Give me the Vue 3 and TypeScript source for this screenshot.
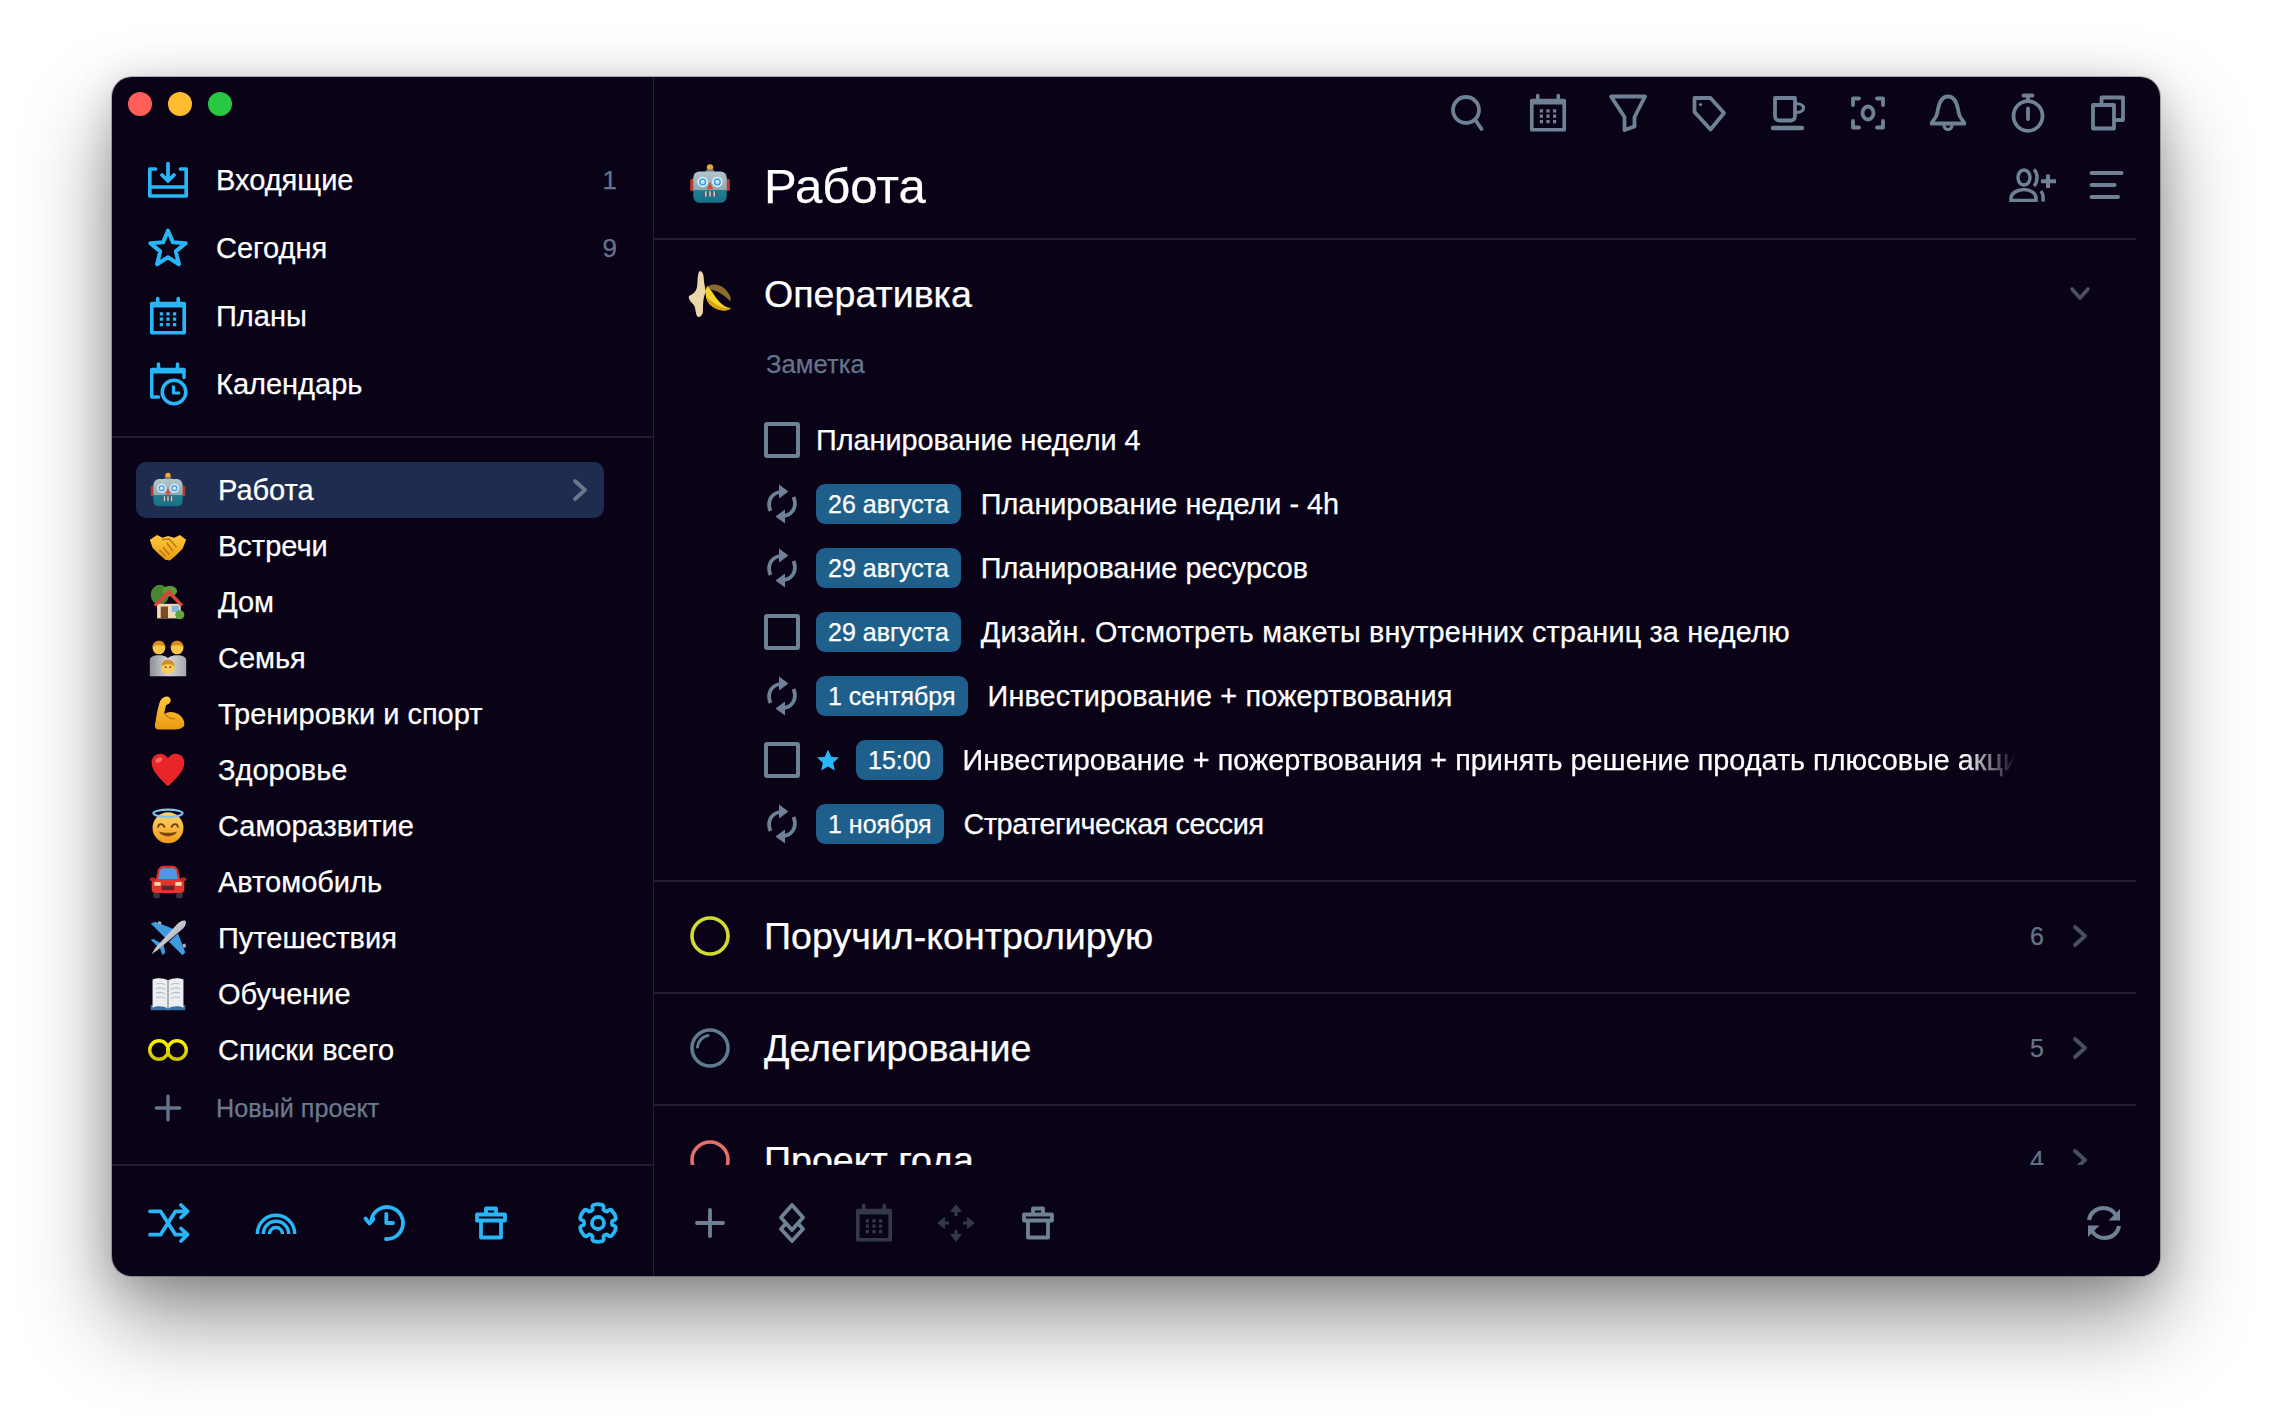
<script setup lang="ts">
interface NavItem { icon: string; label: string; count?: string }
interface Project { icon: string; label: string; active?: boolean }
interface Task { icon: 'check' | 'repeat'; star?: boolean; badge?: string; text: string; long?: boolean; fit?: 'tight' | 'wide' }
interface Section { title: string; count: string; ring: string }

const nav: NavItem[] = [
  { icon: 'i-inbox', label: 'Входящие', count: '1' },
  { icon: 'i-star', label: 'Сегодня', count: '9' },
  { icon: 'i-cal', label: 'Планы' },
  { icon: 'i-calclock', label: 'Календарь' },
]
const projects: Project[] = [
  { icon: 'e-robot', label: 'Работа', active: true },
  { icon: 'e-hands', label: 'Встречи' },
  { icon: 'e-house', label: 'Дом' },
  { icon: 'e-family', label: 'Семья' },
  { icon: 'e-muscle', label: 'Тренировки и спорт' },
  { icon: 'e-heart', label: 'Здоровье' },
  { icon: 'e-halo', label: 'Саморазвитие' },
  { icon: 'e-car', label: 'Автомобиль' },
  { icon: 'e-plane', label: 'Путешествия' },
  { icon: 'e-book', label: 'Обучение' },
  { icon: 'e-rings', label: 'Списки всего' },
]
const sideFoot = ['i-shuffle', 'i-rainbow', 'i-history', 'i-bin', 'i-gear']
const topIcons = ['i-search', 'i-cal', 'i-funnel', 'i-tag', 'i-cup', 'i-focus', 'i-bell', 'i-watch', 'i-copy']
const tasks: Task[] = [
  { icon: 'check', text: 'Планирование недели 4' },
  { icon: 'repeat', badge: '26 августа', text: 'Планирование недели - 4h' },
  { icon: 'repeat', badge: '29 августа', text: 'Планирование ресурсов' },
  { icon: 'check', badge: '29 августа', text: 'Дизайн. Отсмотреть макеты внутренних страниц за неделю', fit: 'wide' },
  { icon: 'repeat', badge: '1 сентября', text: 'Инвестирование + пожертвования', fit: 'wide' },
  { icon: 'check', star: true, badge: '15:00', long: true, text: 'Инвестирование + пожертвования + принять решение продать плюсовые акции' },
  { icon: 'repeat', badge: '1 ноября', text: 'Стратегическая сессия', fit: 'tight' },
]
const sections: Section[] = [
  { title: 'Поручил-контролирую', count: '6', ring: 'lime' },
  { title: 'Делегирование', count: '5', ring: 'slate' },
  { title: 'Проект года', count: '4', ring: 'coral' },
]
const mainFoot = [
  { id: 'i-plus', dim: false, big: false },
  { id: 'i-stack', dim: false, big: false },
  { id: 'i-cal', dim: true, big: false },
  { id: 'i-move', dim: true, big: false },
  { id: 'i-bin', dim: false, big: true },
]

function polar(r: number, deg: number): string {
  const a = (deg * Math.PI) / 180
  return `${(22 + r * Math.cos(a)).toFixed(2)} ${(22 + r * Math.sin(a)).toFixed(2)}`
}
const gearPath = (() => {
  let d = ''
  for (let i = 0; i < 6; i++) {
    const a = -90 + 60 * i
    d += `${i === 0 ? 'M' : 'L'}${polar(14.4, a - 22)}`
    d += `Q${polar(19.5, a - 20)} ${polar(18.6, a - 9)}`
    d += `Q${polar(19.2, a)} ${polar(18.6, a + 9)}`
    d += `Q${polar(19.5, a + 20)} ${polar(14.4, a + 22)}`
    d += `Q${polar(13.4, a + 30)} ${polar(14.4, a + 38)}`
  }
  return d + 'Z'
})()
</script>

<template>
  <div class="page">
    <svg class="sprite" aria-hidden="true">
      <defs>
        <linearGradient id="g-robot" x1="0" y1="0" x2="0" y2="1">
          <stop offset="0" stop-color="#b4c6cc" /><stop offset=".58" stop-color="#90a9b3" /><stop offset=".6" stop-color="#1f7f93" /><stop offset="1" stop-color="#1a6f85" />
        </linearGradient>
        <linearGradient id="g-yellow" x1="0" y1="0" x2="0" y2="1">
          <stop offset="0" stop-color="#ffc83d" /><stop offset="1" stop-color="#e99a12" />
        </linearGradient>
        <linearGradient id="g-gray" x1="0" y1="0" x2="1" y2="0">
          <stop offset="0" stop-color="#8d8f96" /><stop offset=".5" stop-color="#d5d6da" /><stop offset="1" stop-color="#a6a8ae" />
        </linearGradient>
        <linearGradient id="g-face" x1="0" y1="0" x2="0" y2="1">
          <stop offset="0" stop-color="#ffd766" /><stop offset="1" stop-color="#f09a1e" />
        </linearGradient>
        <linearGradient id="g-silver" x1="0" y1="0" x2="1" y2="1">
          <stop offset="0" stop-color="#f2f4f6" /><stop offset="1" stop-color="#8f959c" />
        </linearGradient>
        <linearGradient id="g-rings" x1="0" y1="0" x2="0" y2="1">
          <stop offset="0" stop-color="#fff200" /><stop offset="1" stop-color="#cfc400" />
        </linearGradient>
      </defs>

      <symbol id="i-inbox" viewBox="0 0 40 40"><path d="M7.500 9H1.800V36H38.200V9H32.500M1.800 27H38.200M20 3.500V20.500M14 15L20 21L26 15" fill="none" stroke="currentColor" stroke-width="3.700" stroke-linecap="round" stroke-linejoin="round" /></symbol>
      <symbol id="i-star" viewBox="1 1 38 38"><path d="M20 3.500L24.600 14.600L36.800 15.400L27.400 23.200L30.400 35.400L20 28.800L9.600 35.400L12.600 23.200L3.200 15.400L15.400 14.600Z" fill="none" stroke="currentColor" stroke-width="3.800" stroke-linejoin="round" /></symbol>
      <symbol id="i-cal" viewBox="1.500 1.500 37 37">
        <path d="M5 8.500H35V35.500H5ZM10.500 4V8M29.500 4V8" fill="none" stroke="currentColor" stroke-width="3.400" stroke-linecap="round" stroke-linejoin="round" />
        <path d="M5 10.500H35" stroke="currentColor" stroke-width="3.200" />
        <path d="M12.400 16.500h3v3h-3zM18.500 16.500h3v3h-3zM24.600 16.500h3v3h-3zM12.400 21.500h3v3h-3zM18.500 21.500h3v3h-3zM24.600 21.500h3v3h-3zM12.400 26.500h3v3h-3zM18.500 26.500h3v3h-3zM24.600 26.500h3v3h-3z" fill="currentColor" />
      </symbol>
      <symbol id="i-calclock" viewBox="0 -3 40 46">
        <path d="M10.500 33H3.700V5.500H36V13.500M10.500 0V5M29.500 0V5" fill="none" stroke="currentColor" stroke-width="3.500" stroke-linecap="round" stroke-linejoin="round" />
        <path d="M3.700 8H36" stroke="currentColor" stroke-width="3" />
        <circle cx="26" cy="28" r="11.800" fill="#0a0318" stroke="currentColor" stroke-width="3.500" />
        <path d="M25.500 21.500V29H32" fill="none" stroke="currentColor" stroke-width="3.200" stroke-linejoin="round" />
      </symbol>

      <symbol id="i-shuffle" viewBox="0 0 44 44">
        <path d="M3 10.300H13.500L28.500 33.700H40M3 33.700H13.500L28.500 10.300H40M34 4L40.500 10.300L34 16.500M34 27.500L40.500 33.700L34 40" fill="none" stroke="currentColor" stroke-width="3.800" stroke-linecap="round" stroke-linejoin="round" />
      </symbol>
      <symbol id="i-rainbow" viewBox="0 0 44 44">
        <path d="M3.300 33A18.700 18.700 0 0 1 40.700 33M9.300 33A12.700 12.700 0 0 1 34.700 33M15.500 33A6.500 6.500 0 0 1 28.500 33" fill="none" stroke="currentColor" stroke-width="3.400" />
      </symbol>
      <symbol id="i-history" viewBox="0 0 44 44">
        <path d="M9.500 18A16 16 0 1 1 24 38" fill="none" stroke="currentColor" stroke-width="3.800" stroke-linecap="round" />
        <path d="M3.500 17.500L7.500 22.500L11.500 18" fill="none" stroke="currentColor" stroke-width="3.800" stroke-linejoin="round" stroke-linecap="round" />
        <path d="M24.300 13V22H31" fill="none" stroke="currentColor" stroke-width="3.800" stroke-linejoin="round" stroke-linecap="round" />
      </symbol>
      <symbol id="i-bin" viewBox="0 0 44 44">
        <path d="M17 12V7.500H27V12M8 13.500H36V19.500H8ZM12 19.500V36.500H32V19.500" fill="none" stroke="currentColor" stroke-width="3.800" stroke-linejoin="round" />
      </symbol>
      <symbol id="i-gear" viewBox="0 0 44 44">
        <path :d="gearPath" fill="none" stroke="currentColor" stroke-width="3.800" stroke-linejoin="round" />
        <circle cx="22" cy="22" r="6" fill="none" stroke="currentColor" stroke-width="3.800" />
      </symbol>

      <symbol id="i-search" viewBox="0 0 40 40">
        <circle cx="18" cy="17" r="13" fill="none" stroke="currentColor" stroke-width="3.800" />
        <path d="M27 26.500L33.500 36" fill="none" stroke="currentColor" stroke-width="3.800" stroke-linecap="round" />
      </symbol>
      <symbol id="i-funnel" viewBox="0 0 40 40">
        <path d="M3 3.500H37L26.500 24V33.500L16.500 37V24Z" fill="none" stroke="currentColor" stroke-width="3.800" stroke-linejoin="round" />
      </symbol>
      <symbol id="i-tag" viewBox="0 0 40 40">
        <path d="M6.500 5H22.500L36 20L22.500 36.500L6.500 19Z" fill="none" stroke="currentColor" stroke-width="3.800" stroke-linejoin="round" />
        <circle cx="12.500" cy="11.500" r="1.600" fill="currentColor" />
      </symbol>
      <symbol id="i-cup" viewBox="0 0 40 40">
        <path d="M7 5H27V23C27 26 25 27.500 22.500 27.500H11.500C9 27.500 7 26 7 23Z" fill="none" stroke="currentColor" stroke-width="3.800" stroke-linejoin="round" />
        <path d="M27.500 10.500C32.500 10.500 35.500 12.500 35.500 15C35.500 17.500 32.500 19.500 27.500 19.500" fill="none" stroke="currentColor" stroke-width="3.200" />
        <path d="M5 35H34" stroke="currentColor" stroke-width="4.400" stroke-linecap="round" />
      </symbol>
      <symbol id="i-focus" viewBox="0 0 40 40">
        <path d="M11 5.500H5V12M29 5.500H35V12M11 34.500H5V28M29 34.500H35V28" fill="none" stroke="currentColor" stroke-width="3.800" stroke-linecap="round" stroke-linejoin="round" />
        <ellipse cx="20" cy="20" rx="5.500" ry="6.500" fill="none" stroke="currentColor" stroke-width="3.800" />
      </symbol>
      <symbol id="i-bell" viewBox="0 0 40 40">
        <path d="M3.500 30.500C3.500 28.500 8.500 26 9.500 19C10.500 12 12.500 3.500 20 3.500C27.500 3.500 29.500 12 30.500 19C31.500 26 36.500 28.500 36.500 30.500Z" fill="none" stroke="currentColor" stroke-width="3.800" stroke-linejoin="round" />
        <path d="M16 31.500C16 35 18 36.500 20 36.500C22 36.500 24 35 24 31.500" fill="none" stroke="currentColor" stroke-width="3.200" />
      </symbol>
      <symbol id="i-watch" viewBox="0 0 40 40">
        <ellipse cx="20" cy="23" rx="14.500" ry="14.800" fill="none" stroke="currentColor" stroke-width="3.800" />
        <path d="M15.500 2.500H24.500M20 3V8M20 15.500V26" fill="none" stroke="currentColor" stroke-width="3.800" stroke-linecap="round" />
      </symbol>
      <symbol id="i-copy" viewBox="0 0 40 40">
        <path d="M13.500 12V4.500H35V27H27" fill="none" stroke="currentColor" stroke-width="3.800" stroke-linejoin="round" />
        <path d="M5 12H26V35.500H5Z" fill="none" stroke="currentColor" stroke-width="3.800" stroke-linejoin="round" />
      </symbol>
      <symbol id="i-addperson" viewBox="0 0 48 34">
        <ellipse cx="15" cy="9.500" rx="6" ry="7.500" fill="none" stroke="currentColor" stroke-width="3.500" />
        <path d="M25 1.500C29 5 29 14 25 18M2 32.500V30C2 25 9 21.500 15 21.500C21 21.500 27 25 27 30V32.500ZM32 23C34 25.500 34.500 29 34 33.500" fill="none" stroke="currentColor" stroke-width="3.500" />
        <path d="M39 6.500V20M32 13.300H47" stroke="currentColor" stroke-width="4" />
      </symbol>
      <symbol id="i-lines" viewBox="0 0 40 40">
        <path d="M4.500 8H34.500M4.500 20H27.500M4.500 32H31" stroke="currentColor" stroke-width="4" stroke-linecap="round" />
      </symbol>
      <symbol id="i-plus" viewBox="0 0 40 40">
        <path d="M20 7V33M7 20H33" stroke="currentColor" stroke-width="3.800" stroke-linecap="round" />
      </symbol>
      <symbol id="i-stack" viewBox="0 0 40 40">
        <path d="M20 2L31 14.500L20 27L9 14.500Z" fill="none" stroke="currentColor" stroke-width="3.800" stroke-linejoin="round" />
        <path d="M13.500 21L9 26L20 38L31 26L26.500 21" fill="none" stroke="currentColor" stroke-width="3.800" stroke-linejoin="round" />
      </symbol>
      <symbol id="i-move" viewBox="0 0 40 40">
        <path d="M20 1L26 9H14ZM20 39L14 31H26ZM1 20L9 14V26ZM39 20L31 26V14Z" fill="currentColor" />
        <path d="M20 9V13M20 27V31M9 20H13M27 20H31" stroke="currentColor" stroke-width="3" />
      </symbol>
      <symbol id="i-repeat" viewBox="0 0 32 40">
        <path d="M4.500 27C1.500 20 3 10 14 8" fill="none" stroke="currentColor" stroke-width="3.800" />
        <path d="M13 .500L22.500 7.500L13 14.500Z" fill="currentColor" />
        <path d="M27.500 13C30.500 20 29 30 18 32" fill="none" stroke="currentColor" stroke-width="3.800" />
        <path d="M19 39.500L9.500 32.500L19 25.500Z" fill="currentColor" />
      </symbol>
      <symbol id="i-refresh" viewBox="0 0 40 40">
        <path d="M5 17C6 10 12 5 19.500 5C25 5 29.500 8 32 12" fill="none" stroke="currentColor" stroke-width="4" />
        <path d="M36 6V17.500H24.500Z" fill="currentColor" />
        <path d="M35 23C34 30 28 35 20.500 35C15 35 10.500 32 8 28" fill="none" stroke="currentColor" stroke-width="4" />
        <path d="M4 34V22.500H15.500Z" fill="currentColor" />
      </symbol>
      <symbol id="i-chev" viewBox="0 0 20 24">
        <path d="M5 3L15 12L5 21" fill="none" stroke="currentColor" stroke-width="3.800" stroke-linecap="round" stroke-linejoin="round" />
      </symbol>
      <symbol id="i-down" viewBox="0 0 24 20">
        <path d="M4 5L12 14L20 5" fill="none" stroke="currentColor" stroke-width="3.600" stroke-linecap="round" stroke-linejoin="round" />
      </symbol>

      <symbol id="e-robot" viewBox="-2 -2 44 44">
        <circle cx="20" cy="4" r="3" fill="#f5a623" /><rect x="16" y="6" width="8" height="3" rx="1.500" fill="#6f7c86" />
        <rect x="1" y="15" width="5" height="12" rx="2" fill="#b23a2e" /><rect x="34" y="15" width="5" height="12" rx="2" fill="#b23a2e" />
        <rect x="4" y="8" width="32" height="30" rx="6" fill="url(#g-robot)" />
        <circle cx="13" cy="18" r="5" fill="#e8f4fa" /><circle cx="27" cy="18" r="5" fill="#e8f4fa" />
        <circle cx="13" cy="18" r="3.500" fill="#3c9fe0" /><circle cx="27" cy="18" r="3.500" fill="#3c9fe0" />
        <circle cx="13" cy="18" r="2" fill="#cfe7f5" /><circle cx="27" cy="18" r="2" fill="#cfe7f5" />
        <path d="M20 17.500L23 25H17Z" fill="#e0483b" />
        <rect x="13" y="27" width="14" height="5" rx="1.500" fill="#47606b" />
        <path d="M16 27v5M20 27v5M24 27v5" stroke="#dfe6ea" stroke-width="1.200" />
      </symbol>
      <symbol id="e-hands" viewBox="-2 -2 44 44">
        <path d="M0 13L8 8L14 11L20 9L27 11L33 8L40 13L36 23L28 31L22 36L17 35L9 28L3 22Z" fill="url(#g-yellow)" />
        <path d="M14 13L21 12L29 21M19 17L25 25M15 22L21 29M11 25L17 31" fill="none" stroke="#b9720f" stroke-width="1.500" stroke-linecap="round" />
      </symbol>
      <symbol id="e-house" viewBox="-2 -2 44 44">
        <ellipse cx="11" cy="12" rx="10" ry="11" fill="#47872f" /><ellipse cx="22" cy="8" rx="8" ry="6" fill="#5a9b38" />
        <path d="M8 22H34V38H8Z" fill="#f2dcb4" /><path d="M4 23L21 6L37 23L34 25L21 12L7 25Z" fill="#d9443a" />
        <rect x="12" y="25" width="8" height="13" fill="#7a4a2a" /><rect x="24" y="24" width="8" height="7" fill="#7cb8e0" />
        <circle cx="33" cy="34" r="5" fill="#61a53a" />
      </symbol>
      <symbol id="e-family" viewBox="-2 -2 44 44">
        <path d="M0 40V22C0 19 4 17 10 17C16 17 20 19 20 21C20 19 24 17 30 17C36 17 40 19 40 22V40Z" fill="url(#g-gray)" />
        <circle cx="10" cy="9" r="7" fill="#f7c64b" /><circle cx="30" cy="9" r="7" fill="#f7c64b" />
        <path d="M3 8C3 3 7 1 10 1C13 1 17 3 17 8C14 5 7 5 3 8ZM23 8C23 3 27 1 30 1C33 1 37 3 37 8C34 5 27 5 23 8Z" fill="#d98c1e" />
        <circle cx="20" cy="30" r="7.500" fill="#f9cd5c" /><path d="M13 29C13 24 17 22 20 22C23 22 27 24 27 29C24 26 16 26 13 29Z" fill="#d98c1e" />
        <circle cx="17.500" cy="30" r="1" fill="#5c3a10" /><circle cx="22.500" cy="30" r="1" fill="#5c3a10" />
      </symbol>
      <symbol id="e-muscle" viewBox="-2 -2 44 44">
        <path d="M9 37C6 37 5 34 6 30C7 25 8 16 10 10C11 6 13 2 17 1C20 0 23 2 23 5C23 8 20 10 18 10C17 14 16 17 16 20C20 17 26 17 31 20C36 23 38 27 38 31C38 35 33 37 28 37Z" fill="url(#g-yellow)" />
        <path d="M17 20C19 24 24 26 28 25" fill="none" stroke="#c67d10" stroke-width="1.500" />
      </symbol>
      <symbol id="e-heart" viewBox="-2 -2 44 44">
        <path d="M20 38C13 31 2 22 2 12C2 6 6 2 11.500 2C15 2 18 4 20 7C22 4 25 2 28.500 2C34 2 38 6 38 12C38 22 27 31 20 38Z" fill="#e8262a" />
        <ellipse cx="10" cy="9" rx="4" ry="2.500" fill="#ff6a62" transform="rotate(-30 10 9)" />
      </symbol>
      <symbol id="e-halo" viewBox="-2 -2 44 44">
        <circle cx="20" cy="22" r="17" fill="url(#g-face)" />
        <ellipse cx="20" cy="6" rx="16" ry="4" fill="none" stroke="#7cc4f2" stroke-width="2.400" />
        <path d="M9 21C10 17 14 17 16 21M24 21C26 17 30 17 31 21" fill="none" stroke="#6b3f10" stroke-width="2" stroke-linecap="round" />
        <path d="M10 26C13 33 27 33 30 26C25 28 15 28 10 26Z" fill="#7a4712" />
      </symbol>
      <symbol id="e-car" viewBox="-2 -2 44 44">
        <path d="M6 19L9 6C10 4 12 2 15 2H25C28 2 30 4 31 6L34 19Z" fill="#d8302c" /><path d="M9 17L11 8C11.500 6 13 5 15 5H25C27 5 28.500 6 29 8L31 17Z" fill="#4a9be2" />
        <rect x="2" y="17" width="36" height="15" rx="4" fill="#e2352f" /><rect x="0" y="15" width="6" height="4" rx="1.500" fill="#c22620" /><rect x="34" y="15" width="6" height="4" rx="1.500" fill="#c22620" />
        <rect x="5" y="20" width="7" height="4" rx="1" fill="#f7d9a8" /><rect x="28" y="20" width="7" height="4" rx="1" fill="#f7d9a8" />
        <rect x="13" y="24" width="14" height="5" fill="#5b2a26" /><rect x="4" y="32" width="7" height="6" rx="1.500" fill="#33363d" /><rect x="29" y="32" width="7" height="6" rx="1.500" fill="#33363d" />
      </symbol>
      <symbol id="e-plane" viewBox="-2 -2 44 44">
        <path d="M1 4L6 2L26 10L17 20Z" fill="#3d9be0" />
        <path d="M36 39L39 36L31 15L21 24Z" fill="#3d9be0" />
        <path d="M1 22L4 21L13 26L9 30ZM14 39L17 36L15 27L11 31Z" fill="#3d9be0" />
        <path d="M39 1C41 3 39 8 35 11L9 33L2 38L6 31L29 6C32 2 37 0 39 1Z" fill="url(#g-silver)" />
        <path d="M9 1.500l4 1-1 3-3-1zM36 27l3 -1 1 4-3 1z" fill="#a8aeb5" />
      </symbol>
      <symbol id="e-book" viewBox="-2 -2 44 44">
        <path d="M1 32H39V38H1Z" fill="#3a6ea5" />
        <path d="M3 4C8 2 15 2 20 5C25 2 32 2 37 4V35C32 33 25 33 20 36C15 33 8 33 3 35Z" fill="#eceef1" />
        <path d="M20 5V36" stroke="#8c949c" stroke-width="1.500" />
        <path d="M7 9C10 8 14 8 17 10M7 14C10 13 14 13 17 15M7 19C10 18 14 18 17 20M7 24C10 23 14 23 17 25M23 10C26 8 30 8 33 9M23 15C26 13 30 13 33 14M23 20C26 18 30 18 33 19M23 25C26 23 30 23 33 24" fill="none" stroke="#b8bec5" stroke-width="1.200" />
      </symbol>
      <symbol id="e-rings" viewBox="0 0 40 40">
        <circle cx="11" cy="20" r="9.300" fill="none" stroke="url(#g-rings)" stroke-width="3.400" />
        <circle cx="29" cy="20" r="9.300" fill="none" stroke="url(#g-rings)" stroke-width="3.400" />
      </symbol>
      <symbol id="e-banana" viewBox="0 0 44 48">
        <path d="M12 1C15 1 16 6 16 12L18 22C15 27 15 34 15 42C14 47 10 48 9 46C7 42 8 37 5 34C2 31 0 28 1 26C5 24 8 22 9 17C10 11 9 3 12 1Z" fill="#ead7ac" />
        <path d="M19 17C24 13 32 14 37 19C42 24 44 29 42 31C36 25 30 21 24 20Z" fill="#8a6b2e" />
        <path d="M19 16C16 24 18 33 25 37C31 41 39 42 43 38C38 38 33 34 29 29C26 25 23 19 19 16Z" fill="#f8d32c" />
        <path d="M18 27C20 34 26 39 32 40C37 41 41 40 43 38C38 39 31 37 26 33C23 31 20 28 18 27Z" fill="#d9a012" />
      </symbol>
    </svg>

    <div class="window">
      <aside class="sidebar">
        <div class="traffic"><i class="dot red"></i><i class="dot yellow"></i><i class="dot green"></i></div>
        <nav class="nav">
          <a v-for="n in nav" :key="n.label" class="nav-row">
            <svg class="nav-icon"><use :href="'#' + n.icon" /></svg>
            <span class="nav-label">{{ n.label }}</span>
            <span v-if="n.count" class="nav-count">{{ n.count }}</span>
          </a>
        </nav>
        <div class="projects">
          <a v-for="p in projects" :key="p.label" class="proj-row" :class="{ active: p.active }">
            <svg class="proj-icon"><use :href="'#' + p.icon" /></svg>
            <span class="proj-label">{{ p.label }}</span>
            <svg v-if="p.active" class="proj-chev"><use href="#i-chev" /></svg>
          </a>
          <a class="new-row">
            <svg class="new-icon"><use href="#i-plus" /></svg>
            <span>Новый проект</span>
          </a>
        </div>
        <footer class="side-foot">
          <svg v-for="id in sideFoot" :key="id" class="foot-icon"><use :href="'#' + id" /></svg>
        </footer>
      </aside>

      <main class="main">
        <div class="toolbar">
          <svg v-for="id in topIcons" :key="id" class="tool-icon"><use :href="'#' + id" /></svg>
        </div>
        <header class="head">
          <svg class="head-emoji"><use href="#e-robot" /></svg>
          <h1 class="head-title">Работа</h1>
          <svg class="head-person"><use href="#i-addperson" /></svg>
          <svg class="head-lines"><use href="#i-lines" /></svg>
        </header>
        <div class="scroll">
          <section class="open">
            <div class="open-head">
              <svg class="open-emoji"><use href="#e-banana" /></svg>
              <h2 class="sec-title">Оперативка</h2>
              <svg class="open-chev"><use href="#i-down" /></svg>
            </div>
            <p class="note">Заметка</p>
            <ul class="tasks">
              <li v-for="t in tasks" :key="t.text + t.badge" class="task">
                <span v-if="t.icon === 'check'" class="check"></span>
                <svg v-else class="repeat"><use href="#i-repeat" /></svg>
                <svg v-if="t.star" class="star" viewBox="0 0 24 24"><path d="M12 1.500L15.200 8.700L23 9.500L17.200 14.800L18.800 22.500L12 18.500L5.200 22.500L6.800 14.800L1 9.500L8.800 8.700Z" fill="#29b6f6" /></svg>
                <span v-if="t.badge" class="badge">{{ t.badge }}</span>
                <span class="task-text" :class="[{ fade: t.long }, t.fit]">{{ t.text }}</span>
              </li>
            </ul>
          </section>
          <section v-for="s in sections" :key="s.title" class="closed">
            <svg class="ring" viewBox="0 0 40 40" :class="s.ring">
              <circle cx="20" cy="20" r="18" fill="none" stroke="currentColor" stroke-width="3.600" />
              <path v-if="s.ring === 'slate'" d="M7.500 19C8 13 12.500 8.500 18 7.500" fill="none" stroke="currentColor" stroke-width="3" stroke-linecap="round" />
            </svg>
            <h2 class="sec-title closed-title">{{ s.title }}</h2>
            <span class="sec-count">{{ s.count }}</span>
            <svg class="sec-chev"><use href="#i-chev" /></svg>
          </section>
        </div>
        <footer class="main-foot">
          <svg v-for="b in mainFoot" :key="b.id" class="mf-icon" :class="{ dim: b.dim, big: b.big }"><use :href="'#' + b.id" /></svg>
          <svg class="mf-refresh"><use href="#i-refresh" /></svg>
        </footer>
      </main>
    </div>
  </div>
</template>

<style>
html, body { margin: 0; background: #fff; }
</style>

<style scoped>
.page {
  width: 2272px;
  height: 1424px;
  box-sizing: border-box;
  padding: 77px 112px 0;
  background: #fff;
  font-family: "Liberation Sans", Arial, sans-serif;
  overflow: hidden;
}
.sprite { display: block; width: 0; height: 0; overflow: hidden; }
.window {
  display: flex;
  width: 2048px;
  height: 1199px;
  background: #0a0318;
  border-radius: 20px;
  color: #fff;
  overflow: hidden;
  -webkit-text-stroke: .25px currentColor;
  box-shadow: 0 0 0 1px rgba(60, 60, 70, .35), 0 44px 90px rgba(0, 0, 0, .42), 0 8px 40px rgba(0, 0, 0, .18);
}
.sidebar {
  width: 542px;
  flex: none;
  display: flex;
  flex-direction: column;
  border-right: 1px solid #20202e;
  box-sizing: border-box;
}
.traffic { display: flex; gap: 16px; padding: 15px 0 0 16px; height: 24px; }
.dot { width: 24px; height: 24px; border-radius: 50%; display: block; }
.red { background: #ff5f57; }
.yellow { background: #febc2e; }
.green { background: #28c840; }
.nav {
  margin-top: 30px;
  padding-bottom: 18px;
  border-bottom: 2px solid #20202e;
}
.nav-row { display: flex; align-items: center; height: 68px; padding: 0 36px 0 36px; }
.nav-icon { width: 40px; height: 46px; color: #29b6f6; flex: none; }
.nav-label { margin-left: 28px; font-size: 29px; flex: 1; }
.nav-count { font-size: 26px; color: #64748b; }
.projects { flex: 1; padding-top: 24px; }
.proj-row {
  display: flex;
  align-items: center;
  height: 56px;
  margin: 0 49px 0 24px;
  padding: 0 14px 0 12px;
  border-radius: 10px;
}
.proj-row.active { background: #1e2c50; }
.proj-icon { width: 40px; height: 40px; flex: none; }
.proj-label { margin-left: 30px; font-size: 29px; flex: 1; white-space: nowrap; }
.proj-chev { width: 20px; height: 24px; color: #6b7688; flex: none; }
.new-row {
  display: flex;
  align-items: center;
  height: 56px;
  margin-top: 2px;
  padding-left: 38px;
  color: #6b7a8c;
  font-size: 25.200px;
}
.new-icon { width: 36px; height: 36px; flex: none; margin-right: 30px; color: #64748b; }
.side-foot {
  height: 112px;
  flex: none;
  display: flex;
  align-items: center;
  justify-content: space-between;
  padding: 3px 33px 0 35px;
  border-top: 2px solid #20202e;
  box-sizing: border-box;
}
.foot-icon { width: 44px; height: 44px; color: #29b6f6; }
.main { flex: 1; min-width: 0; display: flex; flex-direction: column; }
.toolbar {
  flex: none;
  display: flex;
  justify-content: flex-end;
  gap: 40px;
  height: 40px;
  padding: 16px 32px 0 0;
}
.tool-icon { width: 40px; height: 40px; color: #6f8295; }
.head {
  flex: none;
  display: flex;
  align-items: center;
  height: 105px;
  margin-right: 24px;
  border-bottom: 2px solid #20202e;
}
.head-emoji { width: 46px; height: 46px; margin: 0 0 4px 33px; flex: none; }
.head-title { margin: 0 0 0 31px; font-size: 49px; font-weight: 400; flex: 1; }
.head-person { width: 48px; height: 34px; color: #6f8295; margin-bottom: 2px; }
.head-lines { width: 40px; height: 40px; color: #6f8295; margin: 0 9px 2px 30px; }
.scroll { flex: 1; min-height: 0; overflow: hidden; margin-right: 24px; }
.open { border-bottom: 2px solid #20202e; height: 642px; box-sizing: border-box; }
.open-head { display: flex; align-items: center; height: 108px; }
.open-emoji { width: 44px; height: 48px; margin-left: 34px; flex: none; }
.sec-title { margin: 0 0 0 32px; font-size: 37.600px; font-weight: 400; flex: 1; white-space: nowrap; }
.open-chev { width: 24px; height: 20px; color: #4a5063; margin-right: 44px; }
.note { margin: 2px 0 0 112px; font-size: 25.700px; color: #64748b; line-height: 28px; }
.tasks { list-style: none; margin: 30px 0 0 110px; padding: 0; }
.task { display: flex; align-items: center; height: 64px; }
.check { width: 36px; height: 36px; box-sizing: border-box; border: 4px solid #6f8295; border-radius: 3px; flex: none; }
.repeat { width: 36px; height: 40px; color: #6f8295; flex: none; }
.star { width: 24px; height: 24px; flex: none; margin-left: 16px; }
.badge {
  flex: none;
  height: 40px;
  line-height: 40px;
  margin-left: 16px;
  padding: 0 12px;
  background: #1e5f8c;
  border-radius: 9px;
  font-size: 25px;
}
.task-text { margin-left: 20px; font-size: 28.800px; white-space: nowrap; }
.task-text.wide { letter-spacing: .17px; }
.task-text.tight { letter-spacing: -.48px; }
.task > .check + .task-text { margin-left: 16px; }
.task-text.fade {
  width: 1053px;
  overflow: hidden;
  -webkit-mask-image: linear-gradient(to right, #000 95%, transparent 100%);
  mask-image: linear-gradient(to right, #000 95%, transparent 100%);
}
.closed { display: flex; align-items: center; height: 108px; padding-bottom: 2px; border-bottom: 2px solid #20202e; }
.ring { width: 40px; height: 40px; margin-left: 36px; flex: none; }
.ring.lime { color: #d2dc2e; }
.ring.slate { color: #5f7c8e; }
.ring.coral { color: #e56f6b; }
.closed-title { margin-left: 34px; }
.sec-count { font-size: 25px; color: #64748b; }
.sec-chev { width: 20px; height: 24px; color: #4a5063; margin: 0 46px 0 26px; }
.main-foot {
  flex: none;
  display: flex;
  align-items: center;
  gap: 42px;
  height: 111px;
  padding: 4px 0 0 36px;
  box-sizing: border-box;
  background: #0a0318;
}
.mf-icon { width: 40px; height: 40px; color: #6f8295; }
.mf-icon.dim { color: #33384a; }
.mf-icon.big { width: 44px; height: 44px; margin: -2px; }
.mf-refresh { width: 40px; height: 40px; color: #6f8295; margin-left: auto; margin-right: 36px; }
</style>
